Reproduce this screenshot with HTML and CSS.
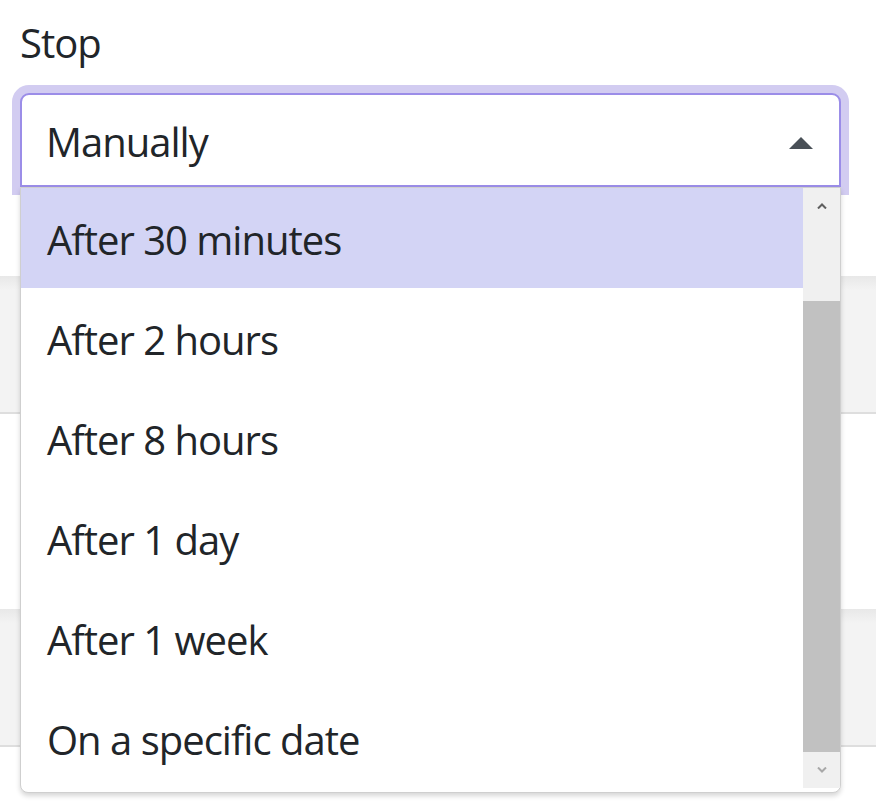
FILE: index.html
```html
<!DOCTYPE html>
<html lang="en">
<head>
<meta charset="utf-8">
<title>Stop</title>
<link rel="stylesheet" href="styles.css">
</head>
<body>
<div class="page">
  <div class="field">
    <label class="label">Stop</label>
    <div class="select-wrap">
      <div class="select">
        <span class="select-value">Manually</span>
        <svg class="caret" width="24" height="12" viewBox="0 0 24 12"><path d="M0 12 L12 0 L24 12 Z" fill="#495057"/></svg>
      </div>
      <div class="listbox">
        <ul class="options">
          <li class="option active">After 30 minutes</li>
          <li class="option">After 2 hours</li>
          <li class="option">After 8 hours</li>
          <li class="option">After 1 day</li>
          <li class="option">After 1 week</li>
          <li class="option">On a specific date</li>
        </ul>
        <div class="scrollbar">
          <div class="sb-btn"><svg width="10" height="6" viewBox="0 0 10 6"><path d="M1 5.5 L5 1.5 L9 5.5" fill="none" stroke="#5f5f5f" stroke-width="2"/></svg></div>
          <div class="sb-gap"></div>
          <div class="sb-thumb"></div>
          <div class="sb-btn"><svg width="10" height="6" viewBox="0 0 10 6"><path d="M1 0.5 L5 4.5 L9 0.5" fill="none" stroke="#a8a8a8" stroke-width="2"/></svg></div>
        </div>
      </div>
    </div>
  </div>
  <div class="rows">
    <div class="row row-gray"></div>
    <div class="row row-white"></div>
    <div class="row row-gray"></div>
  </div>
</div>
</body>
</html>
```
FILE: styles.css
```css
* { box-sizing: border-box; }
html, body { margin: 0; padding: 0; background: #fff; }
body {
  font-family: "Open Sans", "Noto Sans", sans-serif;
  color: #212529;
  width: 876px;
  height: 803px;
  overflow: hidden;
  letter-spacing: -1px;
}
.page { padding-top: 13px; }
.field { padding: 0 35px 0 20px; }
.label {
  display: block;
  font-size: 40px;
  line-height: 60px;
  margin-bottom: 20px;
}
.select-wrap { position: relative; }
.select {
  display: flex;
  align-items: center;
  justify-content: space-between;
  height: 94px;
  border: 2px solid #9b8de8;
  border-radius: 9px 9px 0 0;
  padding: 17px 26px 13px 24px;
  font-size: 40px;
  line-height: 60px;
  box-shadow: 0 0 0 8px #d2ccf1;
  background: #fff;
}
.caret { display: block; margin-top: 2px; }
.listbox {
  position: absolute;
  top: 100%;
  left: 0;
  width: 821px;
  height: 606px;
  background: #fff;
  border: 1px solid #cfcfcf;
  border-radius: 0 0 8px 8px;
  box-shadow: 0 3px 5px rgba(0, 0, 0, 0.16);
  display: flex;
  align-items: flex-start;
  padding-bottom: 4px;
  z-index: 2;
}
.options {
  list-style: none;
  margin: 0;
  padding: 0;
  flex: 1;
}
.option {
  height: 100px;
  line-height: 96px;
  padding: 4px 0 0 26px;
  font-size: 40px;
  color: #212529;
  white-space: nowrap;
}
.option.active { background: #d3d4f5; }
.scrollbar {
  width: 37px;
  height: 600px;
  background: #f0f0f0;
  display: flex;
  flex-direction: column;
}
.sb-btn {
  height: 36px;
  display: flex;
  align-items: center;
  justify-content: center;
}
.sb-gap { height: 77px; }
.sb-thumb { height: 451px; background: #c1c1c1; }
.rows { margin-top: 89px; }
.row { width: 100%; }
.row-gray {
  height: 138px;
  background: linear-gradient(to bottom, #e8e8e8 0, #f3f3f3 14px, #f3f3f3 100%);
  border-bottom: 2px solid #dedede;
}
.row-white { height: 195px; }
```
